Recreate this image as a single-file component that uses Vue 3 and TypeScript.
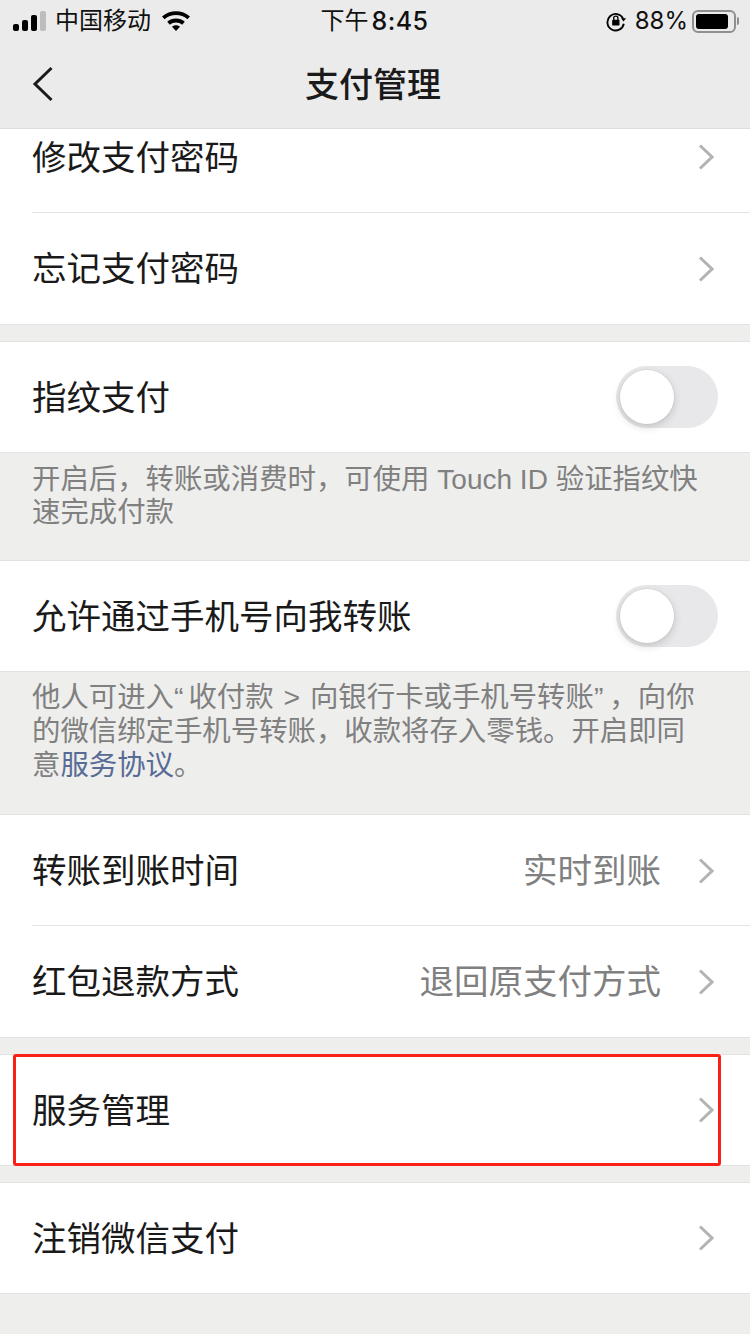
<script setup lang="ts">
interface Row {
  label: string
  value?: string
  toggle?: boolean
  divided?: boolean
  boxed?: boolean
  kind?: 'first' | 'tall'
}
interface Group {
  rows: Row[]
  cls: string
}

const groups: Group[] = [
  {
    cls: 'g1',
    rows: [
      { label: '修改支付密码', divided: true, kind: 'first' },
      { label: '忘记支付密码', kind: 'tall' },
    ],
  },
  {
    cls: 'g2',
    rows: [{ label: '指纹支付', toggle: true }],
  },
  {
    cls: 'g3',
    rows: [{ label: '允许通过手机号向我转账', toggle: true }],
  },
  {
    cls: 'g4',
    rows: [
      { label: '转账到账时间', value: '实时到账', divided: true, kind: 'tall' },
      { label: '红包退款方式', value: '退回原支付方式', kind: 'tall' },
    ],
  },
  { cls: 'g5', rows: [{ label: '服务管理', boxed: true }] },
  { cls: 'g6', rows: [{ label: '注销微信支付' }] },
]
</script>

<template>
  <div class="screen">
    <header class="top">
      <div class="status">
        <div class="status-left">
          <span class="signal"><i class="b1"></i><i class="b2"></i><i class="b3"></i><i class="b4"></i></span>
          <span class="carrier">中国移动</span>
          <svg class="wifi" width="30" height="22" viewBox="0 0 30 22">
            <path d="M1 7.500C8.800 .5 21.200 .5 29 7.500l-2.600 2.800C20 4.700 10 4.700 3.600 10.300z" fill="#000" />
            <path d="M6.200 12.800c5-4.400 12.600-4.400 17.600 0l-2.700 2.900c-3.500-3-8.700-3-12.200 0z" fill="#000" />
            <path d="M11 17.800c2.300-2 5.700-2 8 0L15 22z" fill="#000" />
          </svg>
        </div>
        <div class="clock">下午<span class="digits">8:45</span></div>
        <div class="status-right">
          <svg class="lock" width="22" height="22" viewBox="0 0 24 24">
            <path d="M19.800 9.500A9 9 0 1 0 20.500 15" fill="none" stroke="#000" stroke-width="2" />
            <path d="M17.500 9h5.500l-2.800 3.600z" fill="#000" />
            <rect x="7.800" y="10.500" width="8" height="6.500" rx="1" fill="#000" />
            <path d="M9.500 11V9a2.300 2.300 0 0 1 4.600 0v2" fill="none" stroke="#000" stroke-width="1.500" />
          </svg>
          <span class="pct">88%</span>
          <span class="battery"><span class="fill"></span></span>
          <span class="nub"></span>
        </div>
      </div>
      <div class="nav">
        <svg class="back" width="22" height="36" viewBox="0 0 22 36">
          <path d="M19.500 2 3 18l16.500 16" fill="none" stroke="#1a1a1a" stroke-width="3" />
        </svg>
        <h1>支付管理</h1>
      </div>
    </header>

    <main class="content">
      <template v-for="g in groups" :key="g.cls">
        <section class="group" :class="g.cls">
          <div
            v-for="r in g.rows"
            :key="r.label"
            class="row"
            :class="[r.kind, { divided: r.divided }]"
          >
            <span class="label">{{ r.label }}</span>
            <span v-if="r.value" class="value">{{ r.value }}</span>
            <span v-if="r.toggle" class="switch"><span class="knob"></span></span>
            <svg v-else class="chev" width="16" height="26" viewBox="0 0 16 26">
              <path d="M2 1.500 14 13 2 24.500" fill="none" stroke="#b3b3b3" stroke-width="3" />
            </svg>
            <span v-if="r.boxed" class="mark"></span>
          </div>
        </section>
        <p v-if="g.cls === 'g2'" class="note n2">开启后，转账或消费时，可使用 <span class="latin">Touch ID</span> 验证指纹快速完成付款</p>
        <p v-if="g.cls === 'g3'" class="note n3">他人可进入<span class="q open">“</span>收付款 &gt; 向银行卡或手机号转账<span class="q close">”</span>，向你的微信绑定手机号转账，收款将存入零钱。开启即同意<a>服务协议</a>。</p>
      </template>
    </main>
  </div>
</template>

<style>
html, body { margin: 0; padding: 0; background: #eeeeed; }
</style>

<style scoped>
.screen {
  width: 750px;
  height: 1334px;
  overflow: hidden;
  background: #eeeeed;
  font-family: "Liberation Sans", "Noto Sans CJK SC", sans-serif;
  color: #1a1a1a;
}
.top {
  height: 128px;
  background: #ebebeb;
  border-bottom: 1px solid #dedede;
}
.status {
  height: 40px;
  display: grid;
  grid-template-columns: 1fr auto 1fr;
  align-items: center;
  color: #111;
}
.status-left { display: flex; align-items: center; padding-left: 13px; }
.signal { display: flex; align-items: flex-end; gap: 3px; width: 34px; height: 22px; }
.signal i { display: block; width: 6px; border-radius: 2px; background: #000; margin-bottom: 1px; }
.b1 { height: 7px; }
.b2 { height: 11px; }
.b3 { height: 16px; }
.signal .b4 { height: 20px; background: #bdbdbd; }
.carrier { font-size: 24px; margin-left: 8px; line-height: 40px; }
.wifi { margin-left: 10px; margin-top: -2px; }
.clock { font-size: 24px; line-height: 42px; display: flex; align-items: center; padding-right: 1px; }
.digits { font-family: Inter, "Liberation Sans", sans-serif; font-weight: 500; font-size: 25px; margin-left: 3px; letter-spacing: .4px; }
.status-right { display: flex; align-items: center; justify-content: flex-end; padding-right: 11px; }
.lock { margin-right: 8px; }
.pct { font-family: Inter, "Liberation Sans", sans-serif; font-size: 24px; line-height: 40px; margin-right: 4px; }
.battery {
  box-sizing: border-box;
  width: 44px;
  height: 23px;
  border: 2px solid #8f8f8f;
  border-radius: 6px;
  padding: 2px;
  display: flex;
}
.fill { flex: 1; background: #000; border-radius: 3px; margin-right: 4px; }
.nub { width: 2px; height: 8px; background: #8f8f8f; margin-left: 1px; border-radius: 0 2px 2px 0; }
.nav { height: 88px; position: relative; display: flex; align-items: center; justify-content: center; padding-right: 4px; box-sizing: border-box; }
.back { position: absolute; left: 32px; top: 26px; }
h1 { margin: 2px 0 0; font-size: 34px; font-weight: 500; line-height: 44px; }

.content { display: flex; flex-direction: column; }
.group { background: #fff; border-bottom: 1px solid #e2e2e2; }
.g2, .g3, .g4, .g5, .g6 { border-top: 1px solid #e2e2e2; }
.g2, .g5, .g6 { margin-top: 16px; }
.row {
  position: relative;
  height: 110px;
  display: flex;
  align-items: center;
  padding: 0 36px 0 32px;
  box-sizing: border-box;
}
.row.tall { height: 111px; }
.row.first { height: 84px; padding-bottom: 28px; }
.row.divided::after {
  content: "";
  position: absolute;
  left: 32px;
  right: 0;
  bottom: 0;
  height: 1px;
  background: #e4e4e4;
}
.label { flex: 1; font-size: 34.5px; color: #1a1a1a; white-space: nowrap; margin-bottom: 5px; }
.value { font-size: 34.5px; color: #808080; margin-right: 37px; white-space: nowrap; margin-bottom: 5px; }
.chev { display: block; flex: none; }
.switch {
  box-sizing: border-box;
  width: 102px;
  height: 62px;
  border-radius: 31px;
  background: #e8e8ea;
  margin-right: -4px;
  padding: 4px;
  flex: none;
}
.knob {
  display: block;
  width: 54px;
  height: 54px;
  border-radius: 50%;
  background: #fff;
  box-shadow: 0 3px 8px rgba(0, 0, 0, .16), 0 0 0 1px rgba(0, 0, 0, .03);
}
.note {
  margin: 0;
  box-sizing: border-box;
  padding: 10px 44px 0 32px;
  font-size: 28.4px;
  color: #808080;
}
.n2 { height: 107px; line-height: 33px; }
.n3 { height: 142px; line-height: 34px; padding-top: 8px; word-spacing: 2px; }
.latin { font-size: 28px; }
.q.open { letter-spacing: 5px; }
.q.close { letter-spacing: 6px; }
.note a { color: #576b95; }
.mark {
  position: absolute;
  left: 13px;
  top: -1px;
  width: 708px;
  height: 112px;
  box-sizing: border-box;
  border: 3px solid #fb2015;
  border-radius: 3px;
}
</style>
